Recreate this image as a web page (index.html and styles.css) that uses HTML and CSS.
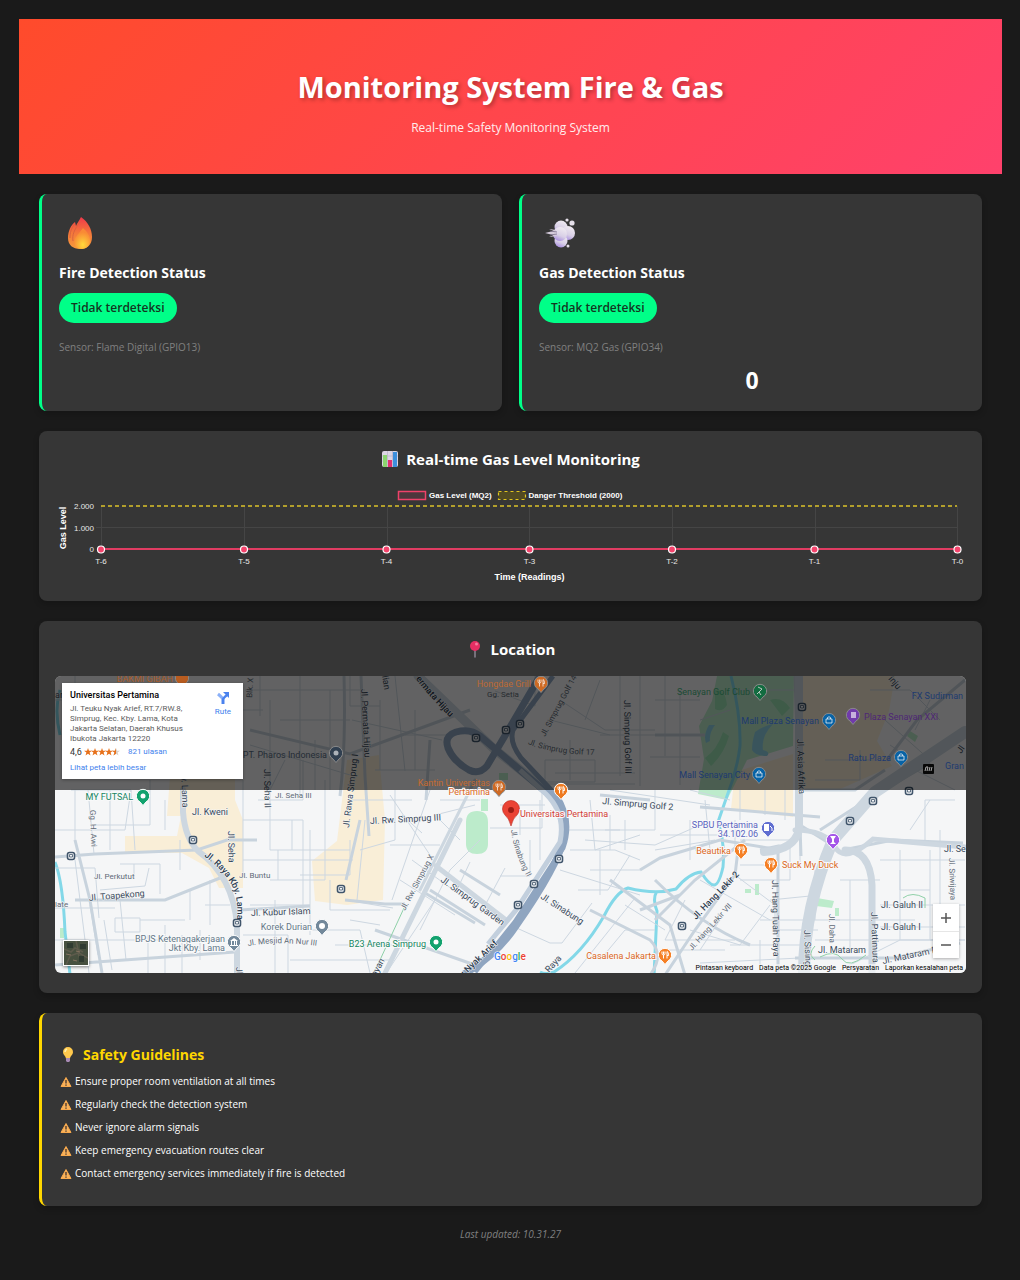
FILE: index.html
```html
<!DOCTYPE html>
<html lang="id">
<head>
<meta charset="utf-8">
<meta name="viewport" content="width=device-width, initial-scale=1">
<title>Monitoring System Fire &amp; Gas</title>
<link rel="stylesheet" href="styles.css">
</head>
<body>
<header class="hero">
  <h1>Monitoring System Fire &amp; Gas</h1>
  <p>Real-time Safety Monitoring System</p>
</header>

<main class="dashboard">
  <div class="status-grid">
    <section class="card status">
      <svg class="status-icon" viewBox="0 0 44 44" aria-hidden="true">
        <defs>
          <linearGradient id="fl1" x1="0" y1="0" x2="0" y2="1"><stop offset="0" stop-color="#f0384a"/><stop offset=".5" stop-color="#f4783a"/><stop offset="1" stop-color="#f79a3c"/></linearGradient>
          <radialGradient id="fl2" cx=".55" cy=".8" r=".6"><stop offset="0" stop-color="#ffd93a"/><stop offset="1" stop-color="#f98a35"/></radialGradient>
        </defs>
        <path d="M22 6C20 10 18 12 17 15L16 11C12 14 9 20 9 27c0 7 5 11 12 11s12-4 12-12C33 18 29 11 22 6Z" fill="url(#fl1)"/>
        <path d="M16 13c-4 4-5 9-5 14M21 11c-6 8-8 13-7 19" fill="none" stroke="#d9633e" stroke-width="1"/>
        <path d="M24 17c-3 5-9 9-9 14 0 4 3 7 8 7s8-4 8-9c0-5-3-8-7-12Z" fill="url(#fl2)"/>
      </svg>
      <h2>Fire Detection Status</h2>
      <span class="pill">Tidak terdeteksi</span>
      <p class="sensor">Sensor: Flame Digital (GPIO13)</p>
    </section>
    <section class="card status">
      <svg class="status-icon" viewBox="0 0 44 44" aria-hidden="true">
        <defs><linearGradient id="gs" x1=".7" y1="0" x2=".3" y2="1"><stop offset="0" stop-color="#f1ecf2"/><stop offset=".6" stop-color="#d8cfe6"/><stop offset="1" stop-color="#a68ae0"/></linearGradient></defs>
        <g fill="url(#gs)"><circle cx="22" cy="16" r="6.500"/><circle cx="29" cy="22" r="7"/><circle cx="22" cy="30" r="6.500"/><circle cx="21" cy="23" r="7"/></g>
        <path d="M6 22l10-2.500v5ZM10 18l7 1v2ZM10 26l7-3v2Z" fill="#d5cbdc"/>
        <path d="M11 20l7 1M11 24l7-1" stroke="#776b88" stroke-width=".8" fill="none"/>
        <g fill="#e6e0ea"><circle cx="28" cy="9" r="1.600"/><circle cx="33" cy="12" r="2.600"/><circle cx="29" cy="35" r="1.500"/></g>
      </svg>
      <h2>Gas Detection Status</h2>
      <span class="pill">Tidak terdeteksi</span>
      <p class="sensor">Sensor: MQ2 Gas (GPIO34)</p>
      <p class="reading">0</p>
    </section>
  </div>

  <section class="card chart-card">
    <h2 class="card-title">
      <svg class="title-icon" viewBox="0 0 18 18" aria-hidden="true"><rect x="1" y="1" width="16" height="16" rx="2" fill="#dcd6e4"/><path d="M1 6h16M1 11h16M6.500 1v16M11.500 1v16" stroke="#b4abc2" stroke-width=".6"/><rect x="2" y="5" width="4" height="12" fill="#8bd46f"/><rect x="7" y="10" width="4" height="7" fill="#e0306f"/><rect x="12" y="2" width="4" height="15" fill="#3d8fdc"/></svg>
      Real-time Gas Level Monitoring
    </h2>
    <svg class="chart" viewBox="55 488 911 96" role="img" aria-label="Gas level readings">
      <g stroke="#454545" stroke-width="1">
        <path d="M96 527.500H957M101.500 506V554M244.500 506V554M387.500 506V554M529.500 506V554M672.500 506V554M815.500 506V554M957.500 506V554"/>
      </g>
      <rect x="398.500" y="491.500" width="27" height="8" fill="#4d363c" stroke="#ee426a" stroke-width="1.500"/>
      <rect x="498.500" y="491.500" width="27" height="8" fill="#524b22" stroke="#e2c61c" stroke-width="1.200" stroke-dasharray="3 3"/>
      <g class="legend"><text x="429" y="498">Gas Level (MQ2)</text><text x="528.500" y="498">Danger Threshold (2000)</text></g>
      <path d="M101 506H957" stroke="#dcc22a" stroke-width="1.300" stroke-dasharray="4 3"/>
      <path d="M101 549H957" stroke="#e03c62" stroke-width="2"/>
      <g fill="#f4436c" stroke="#fff" stroke-width="1.200"><circle cx="101" cy="549.500" r="3.500"/><circle cx="244" cy="549.500" r="3.500"/><circle cx="386.500" cy="549.500" r="3.500"/><circle cx="529.500" cy="549.500" r="3.500"/><circle cx="672" cy="549.500" r="3.500"/><circle cx="814.500" cy="549.500" r="3.500"/><circle cx="957.500" cy="549.500" r="3.500"/></g>
      <g class="ticks end"><text x="94" y="508.500">2.000</text><text x="94" y="530.500">1.000</text><text x="94" y="552">0</text></g>
      <g class="ticks mid"><text x="101" y="564">T-6</text><text x="244" y="564">T-5</text><text x="386.500" y="564">T-4</text><text x="529.500" y="564">T-3</text><text x="672" y="564">T-2</text><text x="814.500" y="564">T-1</text><text x="957.500" y="564">T-0</text></g>
      <g class="axis"><text x="529.500" y="579.500">Time (Readings)</text><text transform="translate(66 528) rotate(-90)">Gas Level</text></g>
    </svg>
  </section>

  <section class="card map-card">
    <h2 class="card-title">
      <svg class="title-icon" viewBox="0 0 18 18" aria-hidden="true"><path d="M9 9v8" stroke="#8d8693" stroke-width="1.500" stroke-linecap="round"/><circle cx="9" cy="6" r="5" fill="#e62e63"/><circle cx="10.500" cy="4" r="1.500" fill="#f57a9b"/></svg>
      Location
    </h2>
    <div class="map">
      <svg class="map-canvas" viewBox="55 676 911 297" preserveAspectRatio="xMidYMid slice" role="img" aria-label="Peta Universitas Pertamina">
        <defs>
          <g id="bus"><rect x="-3.500" y="-3.500" width="7" height="7" rx="2" fill="#f4f6f8" stroke="#40556b" stroke-width="1.600"/><path d="M-1.500-1.500h3v2.500h-3Z" fill="none" stroke="#40556b" stroke-width=".8"/></g>
          <path id="pin" d="M0 9.500L-3 6A6.700 6.700 0 1 1 3 6Z"/>
          <path id="food" d="M-1.500 3.500V0M-3-3.500v2q0 1.500 1.500 1.500t1.500-1.500v-2M-1.500-3.500v3M2 3.500v-7q1.500 0 1.500 4H2" fill="none" stroke="#fff" stroke-width="1"/>
          <path id="bag" d="M-3-1h6v4h-6ZM-1.500-1v-1.500q1.500-1.500 3 0V-1" fill="none" stroke="#fff"/>
          <path id="p-raya" d="M204 856Q222 869 231 884T236 930"/>
          <path id="p-permata" d="M408 668Q428 698 470 736"/>
          <path id="p-golf17" d="M528 744Q556 756 612 755"/>
          <path id="p-nyak" d="M459 981Q484 958 516 926"/>
          <path id="p-mesjid" d="M248 946Q280 940 325 947"/>
          <path id="p-sina" d="M511 830Q514 856 534 890"/>
        </defs>
        <rect x="55" y="676" width="911" height="297" fill="#f5f6f7"/>
        <g fill="#f9eed7">
          <path d="M172 750h63v50l8 20v68h-24l-10-20-27-15h-57v-17h52l4-20h-14Z"/>
          <path d="M347 760l32-5 6 65-2 80-36 5-32-4-3-40 25-20Z"/>
          <path d="M803 676h92l-6 35-12 30 15 25-54 24h-35Z"/>
          <path d="M735 772l58-18v63l-62-8Z"/>
        </g>
        <g fill="#bcebcb">
          <path d="M717 676h77l-1 70-46 14-20 40-29-6 6-35-5-33 13-25Z"/>
          <path d="M466 822q0-11 11-11t11 11v22q0 10-11 10t-11-10ZM481 799h7v12h-7ZM817 898l17 3-2 7-16-2ZM835 908h4v8h-4ZM755 884h4v11h-4ZM745 889h6v4h-6ZM910 731l8 5-3 6-8-6ZM499 773h9v7h-9ZM60 928h4v10h-4Z"/>
        </g>
        <g fill="#9be3b5"><path d="M715 690q10-2 12 15-5 8-12 4ZM705 758q12-8 18-26l6 4q-5 18-18 30ZM770 700q12-4 20 8l-8 8Z"/></g>
        <path d="M709 725q-6 10-3 18l4-2q-1-8 5-16ZM755 732q8-6 18-8-12 12-10 26 8 2 4 6-12 0-15-6 0-8 3-18Z" fill="#90d3e6"/>
        <path d="M731 676q10 40 9 70-3 25-13 50l-9 26q7 20 5 45-4 18-9 18-5 0-13-13-12 1-25 17-20 6-48-1-12 4-24 28-22 38-50 56-8 3-14 0M657 891q-5 8 0 20l-3 65M55 862q8 20 10 70l5 42M60 690q-6 20 0 45" fill="none" stroke="#83d8e8" stroke-width="3"/>
        <g class="minor">
          <path d="M55 830h70l6-40h-60M75 790v50M88 790l6 64M110 790v60M131 790l4 60M150 780v45h-60M55 868h40l4 50M100 890l45-4 4-18M120 864h40v30M134 864v14M55 908h60M115 918h25v14h-25ZM140 920h45M120 900l6 60M104 920l8 50M55 940h120M148 935v38M165 925v48M182 935v38M200 930v30M75 860l10 80 4 33M90 905l8 50"/>
          <path d="M243 780v40h60v90M243 820v55M258 800h45v-40M270 790v60h80M278 850v30M292 820v30M310 830v75M325 780v100h-55M210 880v45M190 890v30M205 905h25M165 800v30M180 840v30M243 860h110M300 875h50v-35M330 880v30h60M250 905h60v30M275 900v73M290 960h100M300 930h60l10 43M335 945h70M243 935h45v38"/>
          <path d="M245 690h120M270 700v90M300 676v120M280 720h70M315 740v50M330 690v100M250 745l100 30M285 760l-20 40M352 800h60M365 820l-8 80M395 790v50l-35 10M375 770h60M380 700v70M395 676l10 95M352 720l90 20M405 735h45M415 710v60M390 795l40 60M430 790l-38 110M402 815l20 18M412 860l55 40M400 880l55 35M420 930l30-60M435 900l-50 75M450 870l30-30M470 862l-14 30M505 868l-24 45M345 900l48 8M350 920l30 5"/>
          <path d="M490 828h52v-38M500 805h45M520 815v20M530 840v36h-30M540 800v60M535 676v30l-40-15M560 700l45 30h50M550 720l60 15M570 740v40M600 680l-15 40M620 676v100M640 676v110M600 735h100M545 760h50v22h-50ZM555 773h80M545 784h90M590 800l5 50 45-15M600 850v45M610 790l100 15M655 790v40h-50M570 850h45l25 10M585 840l70 5 45-20M630 855l-22 35M560 870l80 25M510 925l40 18h12l30-40M520 915l30-50M625 905l40 25M600 960l25-30h30M575 973l60-75M665 676v80M680 690v95M655 700h45M650 757h50M690 790l40 10"/>
          <path d="M660 835h60M690 820v40M705 800l5 50M655 850l60-10M735 820v30h-40M740 790v30M765 790v25M785 790v30M740 840h50v40h-50M740 865h40M735 875l40 30v30M700 880l70 40M685 900l-20 40h70M690 930l50 15 30-40M665 950h60M720 920l-20 30M760 920h80M730 945h70M700 963l100-5M760 940v30M800 830v35M815 870v50M850 880v70M835 920h80M840 880h40M900 850v40h30v-40M880 860h85M930 890v50h35M880 927h85M880 905h85M815 940h120M840 970l60-30h65M925 840v-40h30M910 830l20-30M870 800l45-30 40 20M885 720l45 40 35-30M930 700l-15 30M700 720l30-10M740 690h55M870 690h40l30 30M890 745l15 10M860 750v30h-45M825 760h50"/>
          <path d="M55 700h40M75 676v30M243 710h20M260 676v40M350 676v30h30M440 800h40M435 815l40-10M440 820l20 20M390 845h50M610 815v35M625 820v30M590 870h50M578 890h30M560 830h60M770 900l50-5M773 930h45M900 870v70M940 830v90"/>
        </g>
        <g class="major">
          <path d="M55 857l40-3 102-4 30-10h30M75 840l15 60 12 73M75 900h90l65-26M240 910l70-4M345 900l40 4h20M360 820l-14 60M344 676q2 70-4 120M361 676l4 100 4 60M250 730l100 24 60-22 60-22M55 965l180-13M430 740l-4 60M600 795l50 5M375 930l100 35"/>
          <path d="M700 807l120 10M655 735h50M795 676l6 180M640 870l20-12 60-18 60 10M655 920l40-40 50-40M655 880q45 45 95 65M610 880l60 45 15 50M590 910l60 30q15 15 0 35M430 890l55 35M460 870l40 25M425 893l50 30M795 958h100l65-15M640 910l40-15M887 760l30-40 48-40M820 830l50-32 60-35M795 790h60l30-20"/>
          <path d="M760 850l18-4v130M738 850l-3 25-40 55-30 45M800 825l32 20M843 850l50-10 70 3"/>
        </g>
        <g fill="none" stroke="#cdd7e0" stroke-linecap="round">
          <path d="M183 790v22q2 26 15 39 35 25 39 74v48" stroke-width="6"/>
          <path d="M460 820l-75 153" stroke-width="5"/><path d="M475 780l-55 110" stroke-width="3"/>
          <path d="M418 676l75 72 50 40" stroke-width="9"/>
          <path d="M799 676v154q-5 20-35 22" stroke-width="8"/>
          <path d="M965 732l-90 60-42 48q-30 70-29 138" stroke-width="12"/>
          <path d="M845 850q25 0 27 35v90" stroke-width="7"/>
          <path d="M795 830q30 0 40 17t38-8l92 8" stroke-width="5"/>
          <path d="M436 866l70 54" stroke-width="5"/>
        </g>
        <g fill="none" stroke="#8fa5c0">
          <path d="M540 676l-34 58-19 32q-8 9-18 4-15-8-21-22-4-12 8-16 14-4 24 4l40 34 26 22q20 18 18 46-6 28-48 88-20 30-52 48" stroke-width="7"/>
          <path d="M553 676l-40 54q-4 12 8 28l36 38q16 24 6 52l-48 74-40 50" stroke-width="5"/>
          <path d="M520 770l26 24q20 20 14 48l-44 68-28 34" stroke="#c2cfdd" stroke-width="5"/>
        </g>
        <g fill="none" stroke="#8fd0a8" stroke-width="1"><path d="M404 908l-30 65M903 898q9-7 22 0v10M820 957q15-8 22 2t24-4M815 960q-8-6 0-14"/></g>
        <g class="roads">
          <text transform="translate(361 689) rotate(87)">Jl. Permata Hijau</text>
          <text transform="translate(624 700) rotate(89)">Jl. Simprug Golf III</text>
          <text transform="translate(545 737) rotate(-62)" class="small">Jl. Simprug Golf 14</text>
          <text x="487" y="697" class="small">Gg. Setia</text>
          <text transform="translate(252 698) rotate(-86)" class="small">Blk. X</text>
          <text transform="translate(264 769) rotate(89)">Jl. Seha II</text>
          <text x="275" y="798" class="small">Jl. Seha III</text>
          <text transform="translate(349 828) rotate(-83)">Jl. Rawa Simprug I</text>
          <text x="192" y="815">Jl. Kweni</text>
          <text transform="translate(181 766) rotate(88)">Kby. Lama</text>
          <text transform="translate(90 810) rotate(88)" class="small">Gg. H. Awi</text>
          <text transform="translate(228 831) rotate(89)">Jl. Seha</text>
          <text x="94" y="879" class="small">Jl. Perkutut</text><text x="239" y="878" class="small">Jl. Buntu</text>
          <text transform="translate(89 901) rotate(-5)">Jl. Toapekong</text>
          <text transform="translate(251 916) rotate(-2)">Jl. Kubur Islam</text>
          <text x="55" y="907" class="small">late</text>
          <text transform="translate(370 824) rotate(-3)">Jl. Rw. Simprug III</text>
          <text transform="translate(405 911) rotate(-62)" class="small">Jl. Rw. Simprug X</text>
          <text transform="translate(440 881) rotate(36)">Jl. Simprug Garden</text>
          <text transform="translate(540 898) rotate(33)">Jl. Sinabung</text>
          <text transform="translate(602 804) rotate(5)">Jl. Simprug Golf 2</text>
          <text transform="translate(376 977) rotate(-62)">ayan</text>
          <text transform="translate(549 973) rotate(-48)">Raya</text>
          <text transform="translate(797 739) rotate(88)">Jl. Asia Afrika</text>
          <text transform="translate(888 679) rotate(50)">inju</text><text transform="translate(961 754) rotate(-55)">Jl</text>
          <text transform="translate(696 920) rotate(-46)" class="strong">Jl. Hang Lekir 2</text>
          <text transform="translate(692 951) rotate(-48)" class="small">Jl. Hang Lekir VII</text>
          <text transform="translate(772 880) rotate(89)">Jl. Hang Tuah Raya</text>
          <text transform="translate(804 930) rotate(88)">Jl. Sising</text>
          <text transform="translate(829 914) rotate(89)" class="small">Jl. Daha</text>
          <text transform="translate(871 912) rotate(88)">Jl. Pattimura</text>
          <text x="818" y="953">Jl. Mataram</text><text transform="translate(883 964) rotate(-12)">Jl. Mataram P</text>
          <text x="881" y="908">Jl. Galuh II</text><text x="881" y="930">Jl. Galuh I</text>
          <text x="944" y="852">Jl. Se</text><text transform="translate(949 858) rotate(88)" class="small">Jl. Sriwijaya</text>
          <text class="strong"><textPath href="#p-raya">Jl. Raya Kby. Lama</textPath></text>
          <text class="strong"><textPath href="#p-permata">ri Permata Hijau</textPath></text>
          <text class="small"><textPath href="#p-golf17">Jl. Simprug Golf 17</textPath></text>
          <text class="strong"><textPath href="#p-nyak">ku Nyak Arief</textPath></text>
          <text class="small"><textPath href="#p-mesjid">Jl. Mesjid An Nur III</textPath></text>
          <text class="small"><textPath href="#p-sina">Jl. Sinabung II</textPath></text>
          <text transform="translate(236 967) rotate(88)">Jl.</text>
          <text transform="translate(382 676) rotate(80)">lian</text>
          <text x="55" y="698">ar</text>
        </g>
        <g>
          <use href="#bus" x="476" y="738"/><use href="#bus" x="506" y="730"/><use href="#bus" x="520" y="724"/><use href="#bus" x="802" y="707"/>
          <use href="#bus" x="193" y="840"/><use href="#bus" x="71" y="856"/><use href="#bus" x="237" y="923"/><use href="#bus" x="341" y="889"/>
          <use href="#bus" x="559" y="859"/><use href="#bus" x="534" y="884"/><use href="#bus" x="518" y="905"/><use href="#bus" x="682" y="926"/>
          <use href="#bus" x="873" y="801"/><use href="#bus" x="850" y="821"/><use href="#bus" x="909" y="791"/>
        </g>
        <rect x="55" y="676" width="911" height="114" fill="#000" opacity=".6"/>
        <g stroke-width="1">
          <g class="pin dim-pin"><use href="#pin" x="541" y="683" fill="#ce6a24"/><use href="#pin" x="499" y="787" fill="#ce6a24"/><use href="#pin" x="760" y="691" fill="#136c40"/><use href="#pin" x="829" y="720" fill="#0863a6"/><use href="#pin" x="759" y="774" fill="#0863a6"/><use href="#pin" x="901" y="757" fill="#0863a6"/><use href="#pin" x="853" y="715" fill="#713bab"/><use href="#pin" x="336" y="753" fill="#303f50"/><use href="#pin" x="182" y="678" fill="#b85c20"/></g>
          <g class="pin"><use href="#pin" x="561" y="790" fill="#ee7a20"/><use href="#pin" x="143" y="796" fill="#12a26e"/><use href="#pin" x="436" y="942" fill="#12a26e"/><use href="#pin" x="322" y="926" fill="#72889a"/><use href="#pin" x="234" y="942" fill="#72889a"/><use href="#pin" x="741" y="850" fill="#f58026"/><use href="#pin" x="771" y="864" fill="#f58026"/><use href="#pin" x="665" y="955" fill="#f58026"/><use href="#pin" x="768" y="828" fill="#5f6dd0"/><use href="#pin" x="833" y="840" fill="#a456e8"/></g>
          <use href="#food" x="541" y="683" opacity=".7"/><use href="#food" x="499" y="787" opacity=".7"/><use href="#food" x="561" y="790"/><use href="#food" x="741" y="850"/><use href="#food" x="771" y="864"/><use href="#food" x="665" y="955"/>
          <use href="#bag" x="829" y="720" opacity=".7"/><use href="#bag" x="759" y="774" opacity=".7"/><use href="#bag" x="901" y="757" opacity=".7"/>
          <g fill="#fff"><circle cx="143" cy="796" r="2.500"/><circle cx="436" cy="942" r="2.500"/><circle cx="322" cy="926" r="3"/><circle cx="336" cy="753" r="2.500" opacity=".6"/><path d="M830 836h6l-2 3v3l2 2h-6l2-2v-3ZM764 824h5v7h-5Z"/><path d="M770 826l2 2v3" fill="none" stroke="#fff"/><path d="M230 941l4-3 4 3ZM230 945h8v1h-8ZM231 941h1v4h-1ZM234 941h1v4h-1ZM236 941h1v4h-1Z"/><path d="M851 712h5v6h-5Z" opacity=".6"/></g>
          <path d="M757 694l5-5M758 687l4 2-3 3 2 3" fill="none" stroke="#b9c9bf"/>
          <rect x="923" y="764" width="11" height="10" rx="1" fill="#080808"/><path d="M925 771l1-4h2l-1 4M929 771l1-4M931 771l1-4" stroke="#aaa" fill="none"/>
        </g>
        <path d="M511 826q-2-8-6-11a8.500 8.500 0 1 1 12 0q-4 3-6 11Z" fill="#ea4335" stroke="#b9271c" stroke-width=".6"/><circle cx="511" cy="810" r="3" fill="#9d1c14"/>
        <g class="poi">
          <g class="night">
            <g class="end"><text x="531" y="687" fill="#bd6a33">Hongdae Grill</text><text x="490" y="786" fill="#c66c30">Kantin Universitas</text><text x="173" y="682" fill="#a95c2a">BAKMI GIBAH</text>
            <text x="750" y="695" fill="#1b4a34">Senayan Golf Club</text><text x="819" y="724" fill="#1d3a70">Mall Plaza Senayan</text><text x="750" y="778" fill="#1d3a70">Mall Senayan City</text><text x="891" y="761" fill="#1d3a70">Ratu Plaza</text><text x="963" y="699" fill="#1d3a70">FX Sudirman</text><text x="327" y="758" fill="#242c35">PT. Pharos Indonesia</text></g>
            <text x="945" y="769" fill="#1d3a70">Gran</text><text x="864" y="720" fill="#4e2775">Plaza Senayan XXI</text>
          </g>
          <text x="520" y="817" fill="#d23b35">Universitas Pertamina</text><text x="782" y="868" fill="#dc681c">Suck My Duck</text>
          <g class="end"><text x="490" y="795" fill="#dc681c">Pertamina</text>
          <text x="133" y="800" fill="#15855f">MY FUTSAL</text><text x="426" y="947" fill="#15855f">B23 Arena Simprug</text>
          <text x="312" y="930" fill="#647888">Korek Durian</text><text x="225" y="942" fill="#647888">BPJS Ketenagakerjaan</text><text x="225" y="951" fill="#647888">Jkt Kby. Lama</text>
          <text x="731" y="854" fill="#dc681c">Beautika</text><text x="656" y="959" fill="#dc681c">Casalena Jakarta</text>
          <text x="758" y="828" fill="#5963be">SPBU Pertamina</text><text x="758" y="837" fill="#5963be">34.102.06</text></g>
        </g>
        <text class="google" x="494" y="960"><tspan fill="#4285f4">G</tspan><tspan fill="#ea4335">o</tspan><tspan fill="#fbbc05">o</tspan><tspan fill="#4285f4">g</tspan><tspan fill="#34a853">l</tspan><tspan fill="#ea4335">e</tspan></text>
      </svg>

      <div class="place">
        <div class="place-text">
          <h3>Universitas Pertamina</h3>
          <p>Jl. Teuku Nyak Arief, RT.7/RW.8,<br>Simprug, Kec. Kby. Lama, Kota<br>Jakarta Selatan, Daerah Khusus<br>Ibukota Jakarta 12220</p>
          <div class="rating"><span>4,6</span>
            <svg class="stars" viewBox="0 0 37 8" aria-hidden="true"><defs><path id="st" d="M4 0l1 2.800h3L5.600 4.600l.9 2.900L4 5.700 1.500 7.500l.9-2.900L0 2.800h3Z"/></defs><g fill="#e7711b"><use href="#st"/><use href="#st" x="7"/><use href="#st" x="14"/><use href="#st" x="21"/></g><use href="#st" x="28" fill="#d8cfc8"/><path d="M32 0v5.700l-2.500 1.800.9-2.900L28 2.800h3Z" fill="#e7711b"/></svg>
            <a href="#ulasan">821 ulasan</a></div>
          <a class="bigger" href="#peta">Lihat peta lebih besar</a>
        </div>
        <a class="route" href="#rute"><svg viewBox="0 0 14 14" aria-hidden="true"><path d="M7 13V9Q7 7 2 3" fill="none" stroke="#8ab0f8" stroke-width="3"/><path d="M7 13V9q0-2 4-5" fill="none" stroke="#4a82ee" stroke-width="2.500"/><path d="M7 1h6v6Z" fill="#4a82ee"/></svg>Rute</a>
      </div>
      <button class="satellite" type="button" aria-label="Tampilkan citra satelit">
        <svg viewBox="0 0 24 24" aria-hidden="true"><rect width="24" height="24" fill="#47503f"/><path d="M0 8l7 3 4-4 8 4M2 24l4-9 8-3 3 9M12 0l3 12 9 5" fill="none" stroke="#5e5b4c" stroke-width="1.500"/><path d="M3 2h6v5H3ZM15 15h5v6h-5ZM16 3h6v5h-6Z" fill="#303b31"/><path d="M2 13l5 1M12 10l4 1M9 19l4 1" stroke="#85725f"/></svg>
      </button>
      <div class="zoom">
        <button type="button" aria-label="Perbesar"><svg viewBox="0 0 12 12"><path d="M6 1v10M1 6h10"/></svg></button>
        <button type="button" aria-label="Perkecil"><svg viewBox="0 0 12 12"><path d="M1 6h10"/></svg></button>
      </div>
      <div class="credits"><a href="#pintasan">Pintasan keyboard</a><span>Data peta ©2025 Google</span><a href="#syarat">Persyaratan</a><a href="#lapor">Laporkan kesalahan peta</a></div>
    </div>
  </section>

  <section class="card tips">
    <h2>
      <svg class="title-icon" viewBox="0 0 18 18" aria-hidden="true"><path d="M9 1a5 5 0 0 0-5 5c0 3 3 4 3 7h4c0-3 3-4 3-7a5 5 0 0 0-5-5Z" fill="#ffc94d"/><path d="M8 3q-2 1-2 3" stroke="#fff0b0" stroke-width="1.500" fill="none"/><path d="M7 12h4v3l-1 1H8l-1-1Z" fill="#a88ab4"/></svg>
      Safety Guidelines
    </h2>
    <svg class="sprite" aria-hidden="true"><symbol id="warn" viewBox="0 0 12 12"><path d="M6 1.500 11 10.500H1Z" fill="#f9b25a" stroke="#f9a94c" stroke-width="1" stroke-linejoin="round"/><path d="M6 4v3.500M6 8.500v1.300" stroke="#3f302c" stroke-width="1.300"/></symbol></svg>
    <ul>
      <li><svg><use href="#warn"/></svg>Ensure proper room ventilation at all times</li>
      <li><svg><use href="#warn"/></svg>Regularly check the detection system</li>
      <li><svg><use href="#warn"/></svg>Never ignore alarm signals</li>
      <li><svg><use href="#warn"/></svg>Keep emergency evacuation routes clear</li>
      <li><svg><use href="#warn"/></svg>Contact emergency services immediately if fire is detected</li>
    </ul>
  </section>
</main>
<footer>Last updated: 10.31.27</footer>
</body>
</html>
```
FILE: styles.css
```css
* { box-sizing: border-box; }
body {
  margin: 0;
  padding: 19px 18px 37px 19px;
  background: #1a1a1a;
  color: #fff;
  font-family: "Open Sans", "Noto Sans", sans-serif;
}
h1, h2, h3, p, ul { margin: 0; padding: 0; }
button { border: 0; padding: 0; cursor: pointer; }
a { color: inherit; text-decoration: none; }
svg { display: block; }

.hero {
  padding: 48px 20px 37px;
  background: linear-gradient(135deg, #ff4b2b, #ff416c);
  text-align: center;
}
.hero h1 {
  font-size: 29px;
  line-height: 40px;
  text-shadow: 2px 2px 4px rgba(0, 0, 0, .3);
}
.hero p { margin-top: 12px; font-size: 12px; line-height: 18px; opacity: .9; }

.dashboard {
  display: flex;
  flex-direction: column;
  gap: 20px;
  padding: 20px;
}
.card {
  background: #363636;
  border-radius: 8px;
  box-shadow: 0 3px 6px rgba(0, 0, 0, .2);
}
.status-grid {
  display: grid;
  grid-template-columns: repeat(2, minmax(0, 1fr));
  gap: 17px;
}
.status { padding: 17px 17px 15px; border-left: 3px solid #00ff88; }
.status-icon { width: 44px; height: 44px; }
.status h2 { margin: 8px 0 10px; font-size: 14px; line-height: 20px; }
.pill {
  display: table;
  padding: 0 12px;
  border-radius: 15px;
  background: #00ff88;
  color: #14351f;
  font-size: 12px;
  font-weight: 600;
  line-height: 30px;
}
.sensor { margin-top: 16px; color: #808080; font-size: 10px; line-height: 16px; }
.reading { margin-top: 9px; font-size: 23px; font-weight: 700; line-height: 32px; text-align: center; }

.card-title {
  display: flex;
  align-items: center;
  justify-content: center;
  gap: 7px;
  font-size: 15px;
  line-height: 22px;
}
.title-icon { width: 18px; height: 18px; flex: none; }
.chart-card { padding: 17px 16px; }
.chart { width: 100%; height: auto; margin-top: 18px; font-family: "Liberation Sans", sans-serif; fill: #fff; }
.legend { font-size: 8px; font-weight: 700; }
.ticks { font-size: 8px; fill: #e6e6e6; }
.end { text-anchor: end; }
.mid { text-anchor: middle; }
.axis { font-size: 9px; font-weight: 700; text-anchor: middle; }

.map-card { padding: 17px 16px 20px; }
.map { position: relative; height: 297px; margin-top: 16px; border-radius: 6px; overflow: hidden; font-family: Roboto, sans-serif; }
.map-canvas { width: 100%; height: 100%; }
.minor { fill: none; stroke: #cdd7e1; stroke-width: 1; }
.major { fill: none; stroke: #c8d3dd; stroke-width: 3; }
.roads { font-size: 9px; fill: #3b4b5c; stroke: #f5f6f7; stroke-width: 1px; paint-order: stroke; font-weight: 400; }
.roads .small { font-size: 8px; fill: #5f6b77; }
.roads .strong { fill: #2c3b4e; font-weight: 500; }
.pin { stroke: #fff; }
.dim-pin { stroke: #8a8a8a; }
.poi { font-size: 9px; stroke: #f8f9fa; stroke-width: 2px; paint-order: stroke; }
.night { stroke: none; }
.google { font-size: 10px; font-weight: 500; stroke: #fff; stroke-width: 1px; paint-order: stroke; }

.place {
  position: absolute;
  top: 7px;
  left: 7px;
  display: flex;
  justify-content: space-between;
  width: 181px;
  padding: 6px 12px 4px 8px;
  background: #fff;
  color: #5b5b5b;
  font-size: 8px;
  box-shadow: 0 1px 3px rgba(0, 0, 0, .3);
}
.place h3 { color: #000; font-size: 9px; font-weight: 500; line-height: 12px; }
.place p { margin-top: 3px; line-height: 10px; white-space: nowrap; }
.place-text { width: 120px; }
.place a { color: #427fed; }
.rating { display: flex; align-items: center; margin-top: 1px; line-height: 14px; }
.rating span { color: #333; font-size: 9px; }
.stars { width: 37px; height: 8px; margin: 0 7px 0 2px; }
.bigger { display: block; margin-top: 2px; line-height: 14px; }
.route { display: flex; flex-direction: column; align-items: center; gap: 1px; line-height: 12px; padding-top: 2px; }
.route svg { width: 14px; height: 14px; }
.satellite { position: absolute; left: 8px; bottom: 7px; width: 26px; height: 26px; border: 1px solid #fff; box-shadow: 0 1px 3px rgba(0, 0, 0, .5); }
.zoom { position: absolute; right: 7px; bottom: 15px; width: 26px; background: #fff; box-shadow: 0 1px 3px rgba(0, 0, 0, .3); }
.zoom button { display: grid; place-items: center; width: 26px; height: 27px; background: none; }
.zoom button + button { border-top: 1px solid #e6e6e6; }
.zoom svg { width: 12px; height: 12px; stroke: #555; stroke-width: 1.5px; }
.credits { position: absolute; right: 0; bottom: 0; display: flex; gap: 6px; padding: 0 3px; background: rgba(245, 246, 247, .7); color: #000; font-size: 7px; line-height: 9px; }

.tips { padding: 31px 17px 21px; border-left: 3px solid #ffd700; }
.tips h2 { display: flex; align-items: center; gap: 6px; color: #ffd700; font-size: 14px; line-height: 22px; }
.tips ul { margin-top: 4px; list-style: none; }
.tips li { display: flex; align-items: center; gap: 3px; font-size: 10px; line-height: 23px; }
.tips li svg { width: 12px; height: 12px; margin-left: 1px; }
.sprite { display: none; }
footer { color: #808080; font-size: 10px; font-style: italic; line-height: 16px; text-align: center; }
```
